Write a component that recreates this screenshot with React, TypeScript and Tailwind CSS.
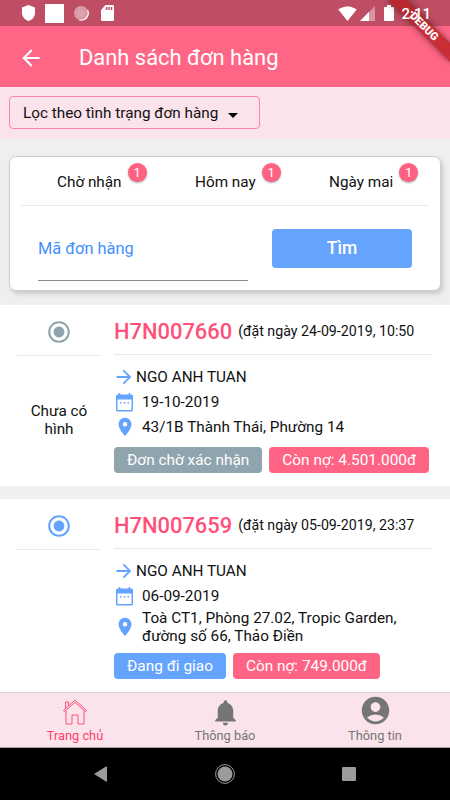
import type { ReactNode } from "react"
import {
  MdAccountCircle,
  MdArrowBack,
  MdArrowForward,
  MdLocationOn,
  MdNotifications,
  MdRadioButtonChecked,
  MdSignalWifi4Bar,
} from "react-icons/md"

const TABS = [
  { label: "Chờ nhận", count: 1, className: "ml-[48px] w-[138px]" },
  { label: "Hôm nay", count: 1, className: "w-[134px]" },
  { label: "Ngày mai", count: 1, className: "" },
] as const

type Order = {
  code: string
  placed: string
  customer: string
  date: string
  address: string[]
  status: string
  debt: string
  pending: boolean
}

const ORDERS: Order[] = [
  {
    code: "H7N007660",
    placed: "(đặt ngày 24-09-2019, 10:50",
    customer: "NGO ANH TUAN",
    date: "19-10-2019",
    address: ["43/1B Thành Thái, Phường 14"],
    status: "Đơn chờ xác nhận",
    debt: "Còn nợ: 4.501.000đ",
    pending: true,
  },
  {
    code: "H7N007659",
    placed: "(đặt ngày 05-09-2019, 23:37",
    customer: "NGO ANH TUAN",
    date: "06-09-2019",
    address: ["Toà CT1, Phòng 27.02, Tropic Garden,", "đường số 66, Thảo Điền"],
    status: "Đang đi giao",
    debt: "Còn nợ: 749.000đ",
    pending: false,
  },
]

function StatusBar() {
  return (
    <div className="relative flex h-[26px] shrink-0 items-center bg-[#bf4d63] text-white">
      <svg className="ml-[21px] h-4 w-[15px]" viewBox="0 0 15 16" fill="currentColor">
        <path d="M7.5 0 14 2.6v5.2c0 3.9-2.7 7.1-6.5 8.2C3.7 14.9 1 11.7 1 7.8V2.6Z" />
      </svg>
      <div className="ml-[9px] h-[19px] w-[19px] bg-white" />
      <svg className="ml-[9px] h-4 w-4" viewBox="0 0 16 16">
        <circle cx="8" cy="8" r="7" fill="#dfa1ae" />
        <circle cx="8" cy="8" r="5.5" fill="none" stroke="#d18a99" strokeWidth="2.5" strokeDasharray="0.8 1.2" />
        <path d="M14.5 5A7 7 0 0 1 6 14.8" fill="none" stroke="white" strokeWidth="1.2" />
      </svg>
      <svg className="ml-[12px] h-4 w-[13px]" viewBox="0 0 13 16">
        <path d="M4.5 0H12q1 0 1 1v14q0 1-1 1H1q-1 0-1-1V5Z" fill="white" />
        <path d="M4.8 2h1.5v3H4.8zM7.3 2h1.5v3H7.3zM9.8 2h1.5v3H9.8z" fill="#bf4d63" />
      </svg>
      <div className="ml-auto mr-[19px] flex items-center">
        <MdSignalWifi4Bar className="h-[19px] w-[19px]" />
        <svg className="ml-[3px] h-[15px] w-[15px]" viewBox="0 0 15 15">
          <path d="M15 0v15H0Z" fill="white" fillOpacity=".4" />
          <path d="M9 6v9H0Z" fill="white" />
        </svg>
        <svg className="ml-[9px] h-4 w-[10px]" viewBox="0 0 10 16" fill="white">
          <path d="M3 0h4v2h2q1 0 1 1v12q0 1-1 1H1q-1 0-1-1V3q0-1 1-1h2Z" />
        </svg>
        <span className="z-10 ml-[7px] mt-[2px] text-[15px] font-medium leading-4">2:11</span>
      </div>
      {/* debug ribbon */}
      <div className="absolute right-0 top-0 h-[72px] w-[72px] overflow-hidden">
        <div className="absolute left-[2px] top-[20px] h-[13px] w-[88px] rotate-45 bg-[#b71c1c]/75 text-center text-[11px] font-black leading-[13px] text-white shadow-[0_0_6px_rgba(0,0,0,0.5)]">
          DEBUG
        </div>
      </div>
    </div>
  )
}

function SearchCard() {
  return (
    <div className="mx-[9px] mt-[17px] h-[135px] shrink-0 rounded-[7px] border border-[#cfcfcf] bg-white px-[11px] shadow-[2px_3px_4px_rgba(0,0,0,0.16)]">
      <div className="-ml-[12px] flex h-[48px] pt-[6px]">
        {TABS.map((tab) => (
          <div key={tab.label} className={`flex ${tab.className}`}>
            <span className="pt-[9px] text-[15.3px] leading-[20px]">{tab.label}</span>
            <span className="ml-[6px] flex h-[19px] w-[19px] items-center justify-center rounded-full bg-[#ff6183] text-[13px] text-white shadow-[0_1px_2px_rgba(0,0,0,0.35)]">
              {tab.count}
            </span>
          </div>
        ))}
      </div>
      <div className="h-px bg-[#eaeaea]" />
      <div className="ml-[17px] flex pt-[22px]">
        <div className="h-[53px] w-[210px] border-b border-[#8e8e8e] pt-[10px] text-[16.4px] leading-[22px] text-[#448fff]">
          Mã đơn hàng
        </div>
        <button className="ml-[24px] mt-[1px] h-[39px] w-[140px] rounded-[4px] bg-[#64a4ff] text-[17.5px] font-medium text-white">
          Tìm
        </button>
      </div>
    </div>
  )
}

function CalendarIcon() {
  return (
    <svg className="h-[19px] w-[17px]" viewBox="0 0 17 19" fill="#64a4ff">
      <path
        fillRule="evenodd"
        d="M2.7 0h1.6v1.5h8.4V0h1.6v1.5h1.2Q17 1.5 17 3v14q0 1.5-1.5 1.5h-14Q0 18.5 0 17V3q0-1.5 1.5-1.5h1.2ZM1.5 6.5V17h14V6.5Z"
      />
      <path d="M4 9h1.5v1.5H4zM7.8 9h1.5v1.5H7.8zM11.5 9H13v1.5h-1.5z" />
    </svg>
  )
}

function OrderRow({ order }: { order: Order }) {
  return (
    <div className="flex bg-white pb-[13px]">
      <div className="ml-[17px] w-[84px]">
        <div className="flex h-[51px] justify-center border-b border-[#e9e9e9] pt-[14px]">
          <MdRadioButtonChecked
            className={`h-[26px] w-[26px] ${order.pending ? "text-[#90a4ae]" : "text-[#64a4ff]"}`}
          />
        </div>
        {order.pending && (
          <p className="px-2 pt-[46px] text-center text-[15.3px] leading-[18px]">Chưa có hình</p>
        )}
      </div>
      <div className="ml-[13px] w-[318px]">
        <div className="flex h-[50px] items-center whitespace-nowrap border-b border-[#e9e9e9] pt-[5px]">
          <span className="text-[21.9px] font-medium text-[#ff5079]">{order.code}</span>
          <span className="ml-[6px] text-[14.2px]">{order.placed}</span>
        </div>
        <div className="mt-[9px] flex h-[26px] items-center text-[15.3px]">
          <MdArrowForward className="-ml-px mr-px h-[22px] w-[22px] text-[#64a4ff]" />
          <span>{order.customer}</span>
        </div>
        <div className="flex h-[25px] items-center pl-[2px] text-[15.3px]">
          <CalendarIcon />
          <span className="ml-[9px]">{order.date}</span>
        </div>
        <div className="flex min-h-[25px] items-center pb-px text-[15.3px] leading-[17.5px]">
          <MdLocationOn className="h-[22px] w-[22px] text-[#64a4ff]" />
          <div className="ml-[6px] whitespace-nowrap pt-px">
            {order.address.map((line) => (
              <div key={line}>{line}</div>
            ))}
          </div>
        </div>
        <div className="mt-[7px] flex gap-[7px] whitespace-nowrap text-[15.4px] leading-[26px] text-white">
          <span className={`rounded-[4px] px-[13px] ${order.pending ? "bg-[#90a4ae]" : "bg-[#64a4ff]"}`}>
            {order.status}
          </span>
          <span className="rounded-[4px] bg-[#ff6485] px-[13px]">{order.debt}</span>
        </div>
      </div>
    </div>
  )
}

function NavItem({ label, active, children }: { label: string; active?: boolean; children: ReactNode }) {
  return (
    <div className={`flex w-[150px] flex-col items-center ${active ? "text-[#ff3f70]" : "text-[#757575]"}`}>
      <div className="flex h-[35px] items-center justify-center">{children}</div>
      <span className="text-[12.8px] leading-[16px]">{label}</span>
    </div>
  )
}

export default function App() {
  return (
    <div className="flex h-[800px] w-[450px] flex-col overflow-hidden bg-[#efefef] font-[Roboto,sans-serif] text-[#111]">
      <StatusBar />
      <header className="flex h-[61px] shrink-0 items-center bg-[#ff6686] pt-[2px] text-white">
        <MdArrowBack className="ml-[18px] h-[26px] w-[26px]" />
        <h1 className="ml-[35px] pt-[1px] text-[21.9px]">Danh sách đơn hàng</h1>
      </header>

      {/* Status filter */}
      <div className="h-[52px] shrink-0 bg-[#fbe3eb] pl-[9px] pt-[9px]">
        <button className="flex h-[33px] w-[251px] items-center rounded-[4px] border border-[#ff83a5] pl-[13px] pt-[2px] text-[15.3px]">
          <span>Lọc theo tình trạng đơn hàng</span>
          <span className="ml-[10px] mt-[3px] border-x-[5.5px] border-t-[5.5px] border-x-transparent border-t-black" />
        </button>
      </div>

      <SearchCard />

      <div className="mt-[14px] flex min-h-0 flex-1 flex-col gap-[13px] overflow-hidden">
        {ORDERS.map((order) => (
          <div key={order.code} className="shrink-0">
            <OrderRow order={order} />
          </div>
        ))}
      </div>

      {/* Bottom navigation */}
      <nav className="flex h-[56px] shrink-0 border-b border-t border-b-[#a99aa0] border-t-[#dcd3d7] bg-[#fbe3eb]">
        <NavItem label="Trang chủ" active>
          <svg className="mt-[3px] h-[26px] w-[26px]" viewBox="0 0 26 26" fill="none" stroke="currentColor" strokeWidth="0.9">
            <path d="M1.5 11.5 13 1l11.5 10.5-1 1.2L13 3.3 2.5 12.7ZM4 12v13h6v-9h6v9h6V12M3.5 9.5V3h3v3.8" />
          </svg>
        </NavItem>
        <NavItem label="Thông báo">
          <MdNotifications className="mt-[3px] h-[31px] w-[31px]" />
        </NavItem>
        <NavItem label="Thông tin">
          <MdAccountCircle className="h-[33px] w-[33px]" />
        </NavItem>
      </nav>
      <div className="flex h-[52px] shrink-0 items-center bg-black">
        <svg className="ml-[94px] h-[16px] w-[13px]" viewBox="0 0 13 16" fill="#9b9b9b">
          <path d="M0 8 12 .5q1-.5 1 .5v14q0 1-1 .5Z" />
        </svg>
        <svg className="ml-[108px] h-5 w-5" viewBox="0 0 20 20">
          <circle cx="10" cy="10" r="7.5" fill="#9b9b9b" />
          <circle cx="10" cy="10" r="9.4" fill="none" stroke="#9b9b9b" strokeWidth="1" />
        </svg>
        <div className="ml-[107px] h-[14px] w-[14px] rounded-[1px] bg-[#9b9b9b]" />
      </div>
    </div>
  )
}
